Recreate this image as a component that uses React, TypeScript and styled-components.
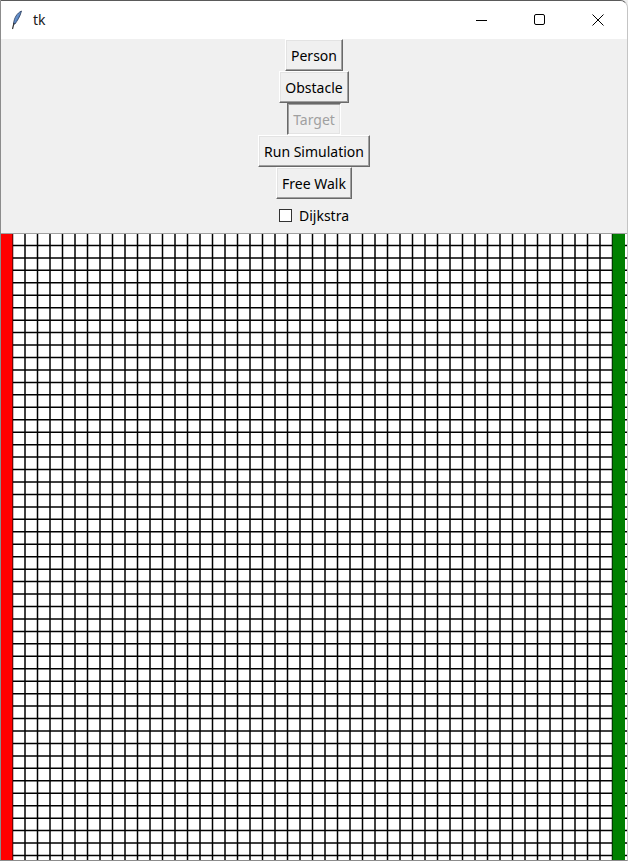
import React, { useState } from "react";
import styled, { createGlobalStyle } from "styled-components";

const GlobalStyle = createGlobalStyle`
	html, body {
		margin: 0;
		padding: 0;
		background: #f0f0f0;
	}
	#root {
		width: 628px;
		height: 861px;
	}
`;

const Window = styled.div`
	width: 628px;
	height: 861px;
	display: flex;
	flex-direction: column;
	box-sizing: border-box;
	border-top: 1px solid #5a5a5a;
	border-left: 1px solid #8c8c8c;
	border-right: 1px solid #c4c4c4;
	border-bottom: 1px solid #8c8c8c;
	border-top-right-radius: 8px;
	overflow: hidden;
	background: #f0f0f0;
	font-family: "Noto Sans", "Open Sans", sans-serif;
`;

const TitleBar = styled.div`
	height: 38px;
	flex-shrink: 0;
	display: flex;
	align-items: center;
	background: #ffffff;
	padding-left: 10px;
	.title-text {
		margin-left: 10px;
		font-size: 14px;
		color: #1a1a1a;
		margin-top: -1px;
	}
`;

const Controls = styled.div`
	margin-left: auto;
	display: flex;
	height: 100%;
`;

const ControlButton = styled.div`
	width: 58px;
	height: 100%;
	display: flex;
	align-items: center;
	justify-content: center;
`;

const Panel = styled.div`
	flex-shrink: 0;
	display: flex;
	flex-direction: column;
	align-items: center;
	padding-top: 0;
	height: 194px;
`;

const TkButton = styled.button`
	height: 32px;
	padding: 0 5px;
	margin: 0;
	box-sizing: border-box;
	background: #f0f0f0;
	font-family: "Noto Sans", "Open Sans", sans-serif;
	font-size: 14px;
	color: #000000;
	border-style: solid;
	border-width: 1px;
	border-color: #ffffff #696969 #696969 #ffffff;
	box-shadow: inset -1px -1px 0 #a0a0a0, inset 1px 1px 0 #e3e3e3;
	outline: none;
	cursor: pointer;
	&:disabled {
		color: #a0a0a0;
		cursor: default;
		border-color: #696969 #ffffff #ffffff #696969;
		box-shadow: inset 1px 1px 0 #a0a0a0, inset -1px -1px 0 #e3e3e3;
	}
`;

const CheckRow = styled.label`
	height: 32px;
	display: flex;
	align-items: center;
	gap: 7px;
	font-size: 14px;
	color: #000000;
	cursor: pointer;
`;

const CheckBox = styled.span<{ $checked: boolean }>`
	width: 13px;
	height: 13px;
	box-sizing: border-box;
	border: 1px solid #333333;
	background: #ffffff;
	display: flex;
	align-items: center;
	justify-content: center;
	font-size: 11px;
	line-height: 1;
	margin-top: 1px;
`;

const CanvasArea = styled.div`
	flex: 1;
	overflow: hidden;
	background: #ffffff;
	border-top: 1px solid #a0a0a0;
`;

const COLS = 50;
const CELL_W = 12.5;
const CELL_H = 12.45;
const ROWS = 51;

const Grid: React.FC = () => {
	const width = 626;
	const height = 630;
	const vLines = [];
	for (let c = 1; c < COLS; c++) {
		vLines.push(<line key={"v" + c} x1={c * CELL_W - 1} y1={0} x2={c * CELL_W - 1} y2={height} />);
	}
	const hLines = [];
	for (let r = 1; r <= ROWS; r++) {
		const y = r * CELL_H - 1;
		hLines.push(<line key={"h" + r} x1={0} y1={y} x2={width} y2={y} />);
	}
	return (
		<svg width={width} height={height} style={{ display: "block" }}>
			<g stroke="#000000" strokeWidth={1.5}>
				{vLines}
				{hLines}
			</g>
			<rect x={0} y={0} width={CELL_W - 1} height={height} fill="#ff0000" />
			<rect x={(COLS - 1) * CELL_W - 1} y={0} width={CELL_W} height={height} fill="#008000" />
		</svg>
	);
};

const Feather = () => (
	<svg width="12" height="20" viewBox="0 0 12 20">
		<defs>
			<linearGradient id="fg" x1="0" y1="0" x2="1" y2="1">
				<stop offset="0" stopColor="#9cc4f2" />
				<stop offset="1" stopColor="#1f4f9a" />
			</linearGradient>
		</defs>
		<path d="M10.5 1 C6 3 3 8 2.5 14 L4 14 C6 11 9 7 10.5 1 Z" fill="url(#fg)" stroke="#2a3b5a" strokeWidth="0.8" />
		<path d="M3 13 L1.5 19" stroke="#333" strokeWidth="1.2" />
	</svg>
);

const App: React.FC = () => {
	const [dijkstra, setDijkstra] = useState(false);
	return (
		<>
			<GlobalStyle />
			<Window>
				<TitleBar>
					<Feather />
					<span className="title-text">tk</span>
					<Controls>
						<ControlButton>
							<svg width="12" height="12" viewBox="0 0 12 12">
								<line x1="0" y1="6.5" x2="11" y2="6.5" stroke="#000" strokeWidth="1" />
							</svg>
						</ControlButton>
						<ControlButton>
							<svg width="12" height="12" viewBox="0 0 12 12">
								<rect x="0.5" y="0.5" width="10" height="10" rx="1.5" fill="none" stroke="#000" strokeWidth="1" />
							</svg>
						</ControlButton>
						<ControlButton>
							<svg width="12" height="12" viewBox="0 0 12 12">
								<path d="M0.5 0.5 L11.5 11.5 M11.5 0.5 L0.5 11.5" stroke="#000" strokeWidth="1" />
							</svg>
						</ControlButton>
					</Controls>
				</TitleBar>
				<Panel>
					<TkButton type="button">Person</TkButton>
					<TkButton type="button">Obstacle</TkButton>
					<TkButton type="button" disabled>
						Target
					</TkButton>
					<TkButton type="button">Run Simulation</TkButton>
					<TkButton type="button">Free Walk</TkButton>
					<CheckRow onClick={() => setDijkstra(!dijkstra)}>
						<CheckBox $checked={dijkstra}>{dijkstra ? "✓" : ""}</CheckBox>
						Dijkstra
					</CheckRow>
				</Panel>
				<CanvasArea>
					<Grid />
				</CanvasArea>
			</Window>
		</>
	);
};

export default App;
